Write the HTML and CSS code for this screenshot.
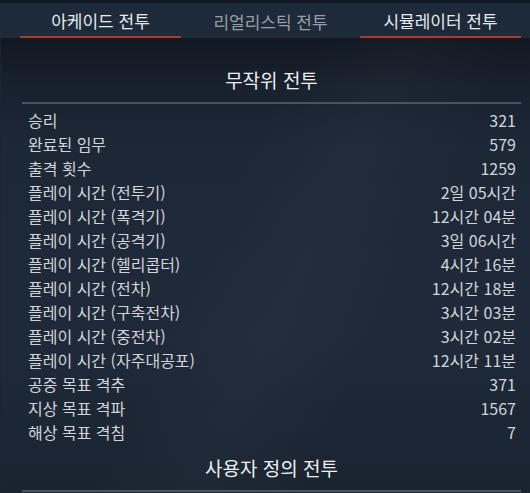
FILE: index.html
```html
<!DOCTYPE html>
<html lang="ko">
<head>
<meta charset="utf-8">
<link rel="stylesheet" href="styles.css">
</head>
<body>
<div class="page">
  <div class="top-strip"></div>
  <nav class="tabs">
    <div class="tab active">아케이드 전투</div>
    <div class="tab dim">리얼리스틱 전투</div>
    <div class="tab active">시뮬레이터 전투</div>
  </nav>
  <main class="content">
    <section class="section first">
      <h2 class="title">무작위 전투</h2>
      <div class="divider"></div>
      <ul class="rows">
        <li class="row"><span>승리</span><span>321</span></li>
        <li class="row"><span>완료된 임무</span><span>579</span></li>
        <li class="row"><span>출격 횟수</span><span>1259</span></li>
        <li class="row"><span>플레이 시간 (전투기)</span><span>2일 05시간</span></li>
        <li class="row"><span>플레이 시간 (폭격기)</span><span>12시간 04분</span></li>
        <li class="row"><span>플레이 시간 (공격기)</span><span>3일 06시간</span></li>
        <li class="row"><span>플레이 시간 (헬리콥터)</span><span>4시간 16분</span></li>
        <li class="row"><span>플레이 시간 (전차)</span><span>12시간 18분</span></li>
        <li class="row"><span>플레이 시간 (구축전차)</span><span>3시간 03분</span></li>
        <li class="row"><span>플레이 시간 (중전차)</span><span>3시간 02분</span></li>
        <li class="row"><span>플레이 시간 (자주대공포)</span><span>12시간 11분</span></li>
        <li class="row"><span>공중 목표 격추</span><span>371</span></li>
        <li class="row"><span>지상 목표 격파</span><span>1567</span></li>
        <li class="row"><span>해상 목표 격침</span><span>7</span></li>
      </ul>
    </section>
    <section class="section">
      <h2 class="title">사용자 정의 전투</h2>
      <div class="divider"></div>
    </section>
  </main>
</div>
</body>
</html>
```

FILE: styles.css
```css
html, body {
  margin: 0;
  padding: 0;
  background: #121a25;
}
body {
  font-family: "Noto Sans CJK KR", "Noto Sans", sans-serif;
  color: #d4d6d8;
}
.page {
  width: 530px;
  height: 493px;
  overflow: hidden;
  display: flex;
  flex-direction: column;
}
.top-strip {
  height: 3px;
  background: #101823;
}
.tabs {
  height: 35px;
  background: #1d2a3a;
  display: flex;
  gap: 9px;
  padding-left: 20px;
  box-sizing: border-box;
}
.tab {
  width: 161px;
  height: 35px;
  box-sizing: border-box;
  display: flex;
  align-items: center;
  justify-content: center;
  font-size: 17px;
  color: #e6e8ea;
  padding-top: 2px;
}
.tab.active {
  border-bottom: 2px solid #b23a28;
}
.tab.dim {
  color: #9a9ea4;
}
.content {
  flex: 1;
  padding: 0 9px 0 21px;
  border-left: 1px solid #1a2432;
  background:
    linear-gradient(115deg, rgba(255,255,255,0) 40%, rgba(255,255,255,0.018) 55%, rgba(255,255,255,0) 70%),
    linear-gradient(180deg, #111822 0px, #18212e 50px, #1d2837 110px, #1e2a3a 300px, #1a2431 454px);
}
.section.first {
  padding-top: 18px;
}
.title {
  margin: 0;
  height: 46px;
  display: flex;
  align-items: center;
  justify-content: center;
  font-size: 19px;
  font-weight: normal;
  color: #eceef0;
}
.divider {
  height: 2px;
  background: #4b535e;
}
.rows {
  list-style: none;
  margin: 0;
  padding: 4px 0 0 0;
}
.row {
  height: 24px;
  display: flex;
  justify-content: space-between;
  align-items: center;
  padding: 0 5px 0 6px;
  font-size: 16px;
  color: #d2d4d6;
}
```
